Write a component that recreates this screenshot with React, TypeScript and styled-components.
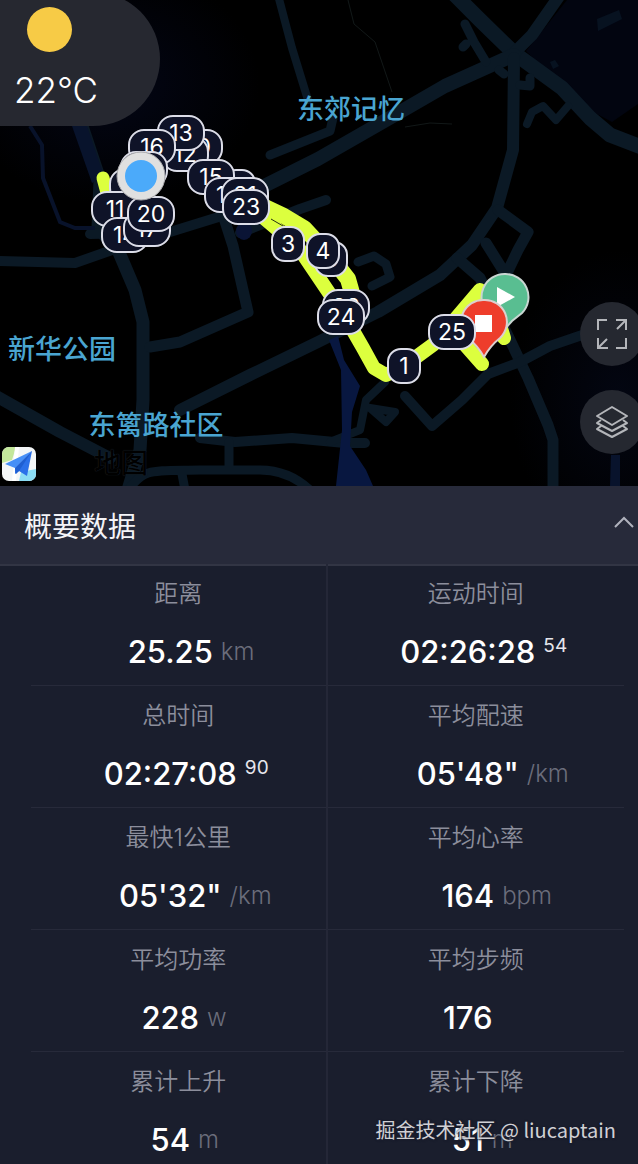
import React from 'react';
import styled, { createGlobalStyle } from 'styled-components';

const MAP_W = 638;
const MAP_H = 486;

const GlobalStyle = createGlobalStyle`
  *, *::before, *::after { box-sizing: border-box; }
  body {
    margin: 0;
    background: #1a1e2d;
    color: #fff;
    font-family: Inter, "Noto Sans CJK SC", sans-serif;
  }
  button { font: inherit; color: inherit; border: 0; padding: 0; cursor: pointer; }
`;

const Page = styled.main`
  position: relative;
  width: 100%;
  overflow: hidden;
`;

const MapArea = styled.section`
  position: relative;
  height: 486px;
  overflow: hidden;
  background: #000;
`;

const MapDrawing = styled.svg`
  display: block;
  width: 100%;
  height: 100%;
`;

const Place = styled.span<{ $x: number; $y: number }>`
  position: absolute;
  left: ${p => (p.$x / MAP_W) * 100}%;
  top: ${p => (p.$y / MAP_H) * 100}%;
  transform: translate(-50%, -50%);
  color: #4aa5d1;
  font-size: 27px;
  line-height: 32px;
  font-weight: 500;
  white-space: nowrap;
`;

const Credit = styled(Place)`
  color: #000;
  text-shadow: 0 0 1px #26323c;
`;

const Pin = styled.span<{ $x: number; $y: number; $wide: boolean }>`
  position: absolute;
  left: ${p => (p.$x / MAP_W) * 100}%;
  top: ${p => (p.$y / MAP_H) * 100}%;
  transform: translate(-50%, -50%);
  display: flex;
  align-items: center;
  justify-content: center;
  width: ${p => (p.$wide ? 48 : 34)}px;
  height: 36px;
  border: 2px solid #dcdde8;
  border-radius: ${p => (p.$wide ? 16 : 14)}px;
  background: #0f1328;
  color: #fff;
  font-size: 23px;
  line-height: 24px;
`;

const Marker = styled.svg<{ $x: number; $y: number }>`
  position: absolute;
  left: ${p => (p.$x / MAP_W) * 100}%;
  top: ${p => (p.$y / MAP_H) * 100}%;
  transform: translate(-50%, -50%);
`;

const Weather = styled.div`
  position: absolute;
  top: -8px;
  left: 0;
  width: 160px;
  height: 134px;
  padding: 15px 0 0 14px;
  border-radius: 0 67px 67px 0;
  background: #262830;
`;

const Sun = styled.div`
  width: 45px;
  height: 45px;
  margin-left: 13px;
  border-radius: 50%;
  background: #f7cb46;
`;

const Temperature = styled.div`
  margin-top: 16px;
  font-size: 35px;
  font-weight: 350;
  line-height: 44px;
`;

const Controls = styled.div`
  position: absolute;
  top: 302px;
  right: -6px;
  display: flex;
  flex-direction: column;
  gap: 24px;
`;

const RoundButton = styled.button`
  display: grid;
  place-items: center;
  width: 64px;
  height: 64px;
  border-radius: 50%;
  background: #252830;
`;

const MapLogo = styled.svg`
  position: absolute;
  left: 2px;
  bottom: 5px;
`;

const SectionTitle = styled.h2`
  margin: 0 0 -2px;
  font-size: 28px;
  font-weight: 400;
`;

const Toggle = styled.button`
  display: flex;
  align-items: center;
  justify-content: space-between;
  width: 100%;
  height: 80px;
  padding: 4px 4px 0 24px;
  border-bottom: 2px solid #323544;
  background: #272a3a;
  line-height: 40px;
  && { color: #f4f4f8; }
`;

const Chevron = styled.svg`
  margin-bottom: 10px;
`;

const Stats = styled.dl`
  display: grid;
  grid-template-columns: 1fr 1fr;
  margin: 0;
  padding: 0 14px 0 31px;
`;

const Stat = styled.div`
  padding: 16px 0 13px;
  border-bottom: 1px solid #272a3a;
  &:nth-child(odd) { border-right: 2px solid #242737; }
  &:nth-last-child(-n + 2) {
    padding-bottom: 4px;
    border-bottom: 0;
  }
`;

const Label = styled.dt`
  color: #8c8e9c;
  font-size: 24px;
  font-weight: 350;
  line-height: 28px;
  text-align: center;
`;

const Reading = styled.dd`
  display: grid;
  grid-template-columns: 1fr auto 1fr;
  align-items: center;
  margin: 24px 0 0;
  padding-right: 16px;
  line-height: 40px;
`;

const Value = styled.span`
  grid-column: 2;
  font-size: 31px;
  font-weight: 500;
`;

const Unit = styled.span`
  padding-left: 8px;
  color: #6b6d7b;
  font-size: 24px;
  font-weight: 350;
  line-height: 38px;
`;

const Hundredths = styled.sup`
  align-self: start;
  padding-left: 8px;
  color: #e6e6ec;
  font-size: 19px;
  line-height: 28px;
`;

const Watermark = styled.div`
  position: absolute;
  right: 22px;
  bottom: 20px;
  color: #d0d0d4;
  font-family: "Noto Sans CJK SC", sans-serif;
  font-size: 20px;
  line-height: 28px;
  text-shadow: 0 0 2px #1a1d2d, 1px 1px 2px #1a1d2d;
`;

type PinData = { n: string; x: number; y: number };

const lowerPins: PinData[] = [
  { n: '10', x: 199, y: 147 },
  { n: '12', x: 185, y: 154 },
  { n: '13', x: 181, y: 133 },
  { n: '16', x: 152, y: 147 },
  { n: '18', x: 133, y: 186 },
  { n: '19', x: 144, y: 169 },
  { n: '9', x: 239, y: 187 },
  { n: '15', x: 211, y: 177 },
  { n: '14', x: 228, y: 195 },
  { n: '21', x: 245, y: 195 },
  { n: '23', x: 246, y: 207 },
  { n: '3', x: 288, y: 244 },
  { n: '5', x: 331, y: 259 },
  { n: '4', x: 323, y: 251 },
  { n: '22', x: 346, y: 307 },
  { n: '24', x: 341, y: 317 },
  { n: '1', x: 404, y: 366 },
  { n: '11', x: 115, y: 209 },
  { n: '14', x: 125, y: 235 },
  { n: '17', x: 147, y: 229 },
];

const upperPins: PinData[] = [
  { n: '25', x: 452, y: 332 },
  { n: '20', x: 151, y: 214 },
];

const places = [
  { name: '东郊记忆', x: 351, y: 110 },
  { name: '新华公园', x: 62, y: 350 },
  { name: '东篱路社区', x: 156, y: 426 },
];

type StatData = { label: string; value: string; unit?: string; sup?: string };

const stats: StatData[] = [
  { label: '距离', value: '25.25', unit: 'km' },
  { label: '运动时间', value: '02:26:28', sup: '54' },
  { label: '总时间', value: '02:27:08', sup: '90' },
  { label: '平均配速', value: '05\'48"', unit: '/km' },
  { label: '最快1公里', value: '05\'32"', unit: '/km' },
  { label: '平均心率', value: '164', unit: 'bpm' },
  { label: '平均功率', value: '228', unit: 'w' },
  { label: '平均步频', value: '176' },
  { label: '累计上升', value: '54', unit: 'm' },
  { label: '累计下降', value: '51', unit: 'm' },
];

const Pins = ({ items }: { items: PinData[] }) => (
  <>
    {items.map((p, i) => (
      <Pin key={i} $x={p.x} $y={p.y} $wide={p.n.length > 1}>{p.n}</Pin>
    ))}
  </>
);

const Streets = () => (
  <MapDrawing viewBox={`0 0 ${MAP_W} ${MAP_H}`} preserveAspectRatio="none" aria-hidden="true">
    <defs>
      <radialGradient id="nightWest" cx="0.5" cy="0.5" r="0.5">
        <stop offset="0" stopColor="#030616" />
        <stop offset="1" stopColor="#000" />
      </radialGradient>
      <radialGradient id="nightEast" cx="0.5" cy="0.5" r="0.5">
        <stop offset="0" stopColor="#030612" />
        <stop offset="1" stopColor="#000" />
      </radialGradient>
    </defs>
    <rect width="638" height="486" fill="#000" />
    <ellipse cx="110" cy="85" rx="150" ry="120" fill="url(#nightWest)" />
    <ellipse cx="620" cy="400" rx="110" ry="150" fill="url(#nightEast)" />
    <path d="M567 0H638V104L612 122L580 105L526 51Z" fill="#020510" />
    <g fill="none" stroke="#0b1925" strokeWidth="12" strokeLinejoin="round" strokeLinecap="round">
      <path d="M644 148L610 135L590 118L562 88L514 53L480 20L455 -5" strokeWidth="15" />
      <path d="M514 53L532 35L560 -5" />
      <path d="M514 55L445 86L400 112L318 159L250 193" strokeWidth="14" />
      <path d="M514 58L513 150L497 208L472 245L440 275L378 312L318 342L250 375L180 410" />
      <path d="M270 155L330 131L333 118" strokeWidth="9" />
      <path d="M240 233L300 209L326 200" strokeWidth="10" />
      <path d="M278 -5L292 48L308 100" strokeWidth="8" />
      <path d="M82 126L100 180L98 228L118 250L135 290L143 322L143 400L140 450L128 490" strokeWidth="13" />
      <path d="M90 234L170 232L225 215" strokeWidth="10" />
      <path d="M0 261L75 263L112 250" strokeWidth="10" />
      <path d="M223 215L233 246L248 312L180 342L150 347" strokeWidth="11" />
      <path d="M-4 396L60 432L110 458" />
      <path d="M200 438L235 442L292 438L345 443H365" strokeWidth="10" />
      <path d="M229 442V470M128 490C145 468 150 471 200 470H260Q290 470 312 492M185 490L182 474" strokeWidth="9" />
      <path d="M465 24L474 42L486 62M463 47L466 44M499 70L504 74M530 78L530 86L520 85" strokeWidth="9" />
      <path d="M527 124L532 112L543 106L556 120L568 106" strokeWidth="8" />
      <path d="M498 210L528 232L518 250L506 275L486 243M457 258L480 278L510 340L528 378L548 425L553 440V490" strokeWidth="11" />
      <path d="M585 334L550 346L520 362L488 374L462 400L432 426L405 396" strokeWidth="10" />
      <path d="M358 262L374 256L386 264L390 277L372 286" strokeWidth="9" />
      <path d="M385 382L366 400L360 430L330 442M370 408L395 412L386 422Z" strokeWidth="8" />
    </g>
    <path d="M30 126L42 145L43 178L60 222L75 228L95 228" fill="none" stroke="#08122a" strokeWidth="4" />
    <path d="M72 126H87L104 176L92 183Z" fill="#08132c" />
    <path d="M329 340L338 336L344 360L360 386L352 412L350 446L366 470L373 486H336L342 430L341 370Z" fill="#081740" />
    <path d="M611 455H620V486H610Z" fill="#08132c" />
    <path d="M597 19L619 10L622 19L598 31Z M550 62L555 60L559 66L553 69Z" fill="#071220" />
    <ellipse cx="244" cy="231" rx="8" ry="9" fill="#0a1435" />
    <path d="M348 0L354 24L375 42L392 92M405 127L430 123L452 124" fill="none" stroke="#121818" strokeWidth="1" />
    <g fill="none" stroke="#dcff3e" strokeWidth="14" strokeLinejoin="round" strokeLinecap="round">
      <path d="M103 178L109 200L130 222" strokeWidth="13" />
      <path d="M250 206L278 230L296 244L315 272L344 315L363 348L374 368L386 375L404 366L434 344L480 290L500 325L504 338" />
      <path d="M250 200L284 216L304 228L330 256L348 279L354 300" strokeWidth="16" />
      <path d="M452 330L482 364" />
    </g>
    <path d="M271 219L283 226" fill="none" stroke="#263012" strokeWidth="1" />
  </MapDrawing>
);

export default function App() {
  return (
    <Page>
      <GlobalStyle />
      <MapArea aria-label="轨迹地图">
        <Streets />
        {places.map(p => <Place key={p.name} $x={p.x} $y={p.y}>{p.name}</Place>)}
        <Credit $x={121} $y={464}>地图</Credit>
        <Pins items={lowerPins} />
        <Marker $x={505} $y={302} width="50" height="60" viewBox="0 0 50 60" aria-hidden="true">
          <path d="M25 2A23 23 0 0 1 42 41L32 49L25 57L18 49L8 41A23 23 0 0 1 25 2Z" fill="#59be91" stroke="#c9d6d2" strokeWidth="2" />
          <path d="M17 15L35 25L17 35Z" fill="#fff" />
        </Marker>
        <Marker $x={484} $y={329} width="48" height="62" viewBox="0 0 48 62" aria-hidden="true">
          <path d="M24 2A22 22 0 0 1 40 40Q30 48 24 59Q18 48 8 40A22 22 0 0 1 24 2Z" fill="#ee3d2b" stroke="#dccfcf" strokeWidth="2" />
          <rect x="15" y="17" width="17" height="17" fill="#fff" />
        </Marker>
        <Pins items={upperPins} />
        <Marker $x={141} $y={176} width="52" height="52" viewBox="0 0 52 52" aria-hidden="true">
          <circle cx="26" cy="26" r="24" fill="#e0e0e0" stroke="#a9a9ac" strokeWidth="1" />
          <circle cx="26" cy="26" r="16" fill="#4baafa" />
        </Marker>
        <Weather>
          <Sun />
          <Temperature>22°C</Temperature>
        </Weather>
        <Controls>
          <RoundButton type="button" aria-label="全屏">
            <svg width="32" height="32" viewBox="0 0 32 32" fill="none" stroke="#b4b6ba" strokeWidth="2">
              <path d="M2 12V2H11M20 2H30V12M30 2L21 11M30 20V30H20M2 20V30H12M2 30L11 21" />
            </svg>
          </RoundButton>
          <RoundButton type="button" aria-label="图层">
            <svg width="34" height="34" viewBox="0 0 34 34" fill="none" stroke="#b4b6ba" strokeWidth="2" strokeLinejoin="round">
              <path d="M17 2L32 11L17 20L2 11Z" />
              <path d="M6 15L2 18L17 26L32 18L28 15M6 21L2 24L17 32L32 24L28 21" />
            </svg>
          </RoundButton>
        </Controls>
        <MapLogo width="34" height="34" viewBox="0 0 34 34" aria-hidden="true">
          <defs><clipPath id="logoClip"><rect width="34" height="34" rx="7" /></clipPath></defs>
          <g clipPath="url(#logoClip)">
            <rect width="34" height="34" fill="#f3f6f7" />
            <path d="M0 0H14L10 13L0 16Z" fill="#c3e79b" />
            <path d="M19 25L34 22V34H17Z" fill="#8bdcf4" />
            <path d="M13 0H17L14 34H10Z" fill="#fff" />
            <path d="M30 4L3 17L13 21Z" fill="#468ff7" />
            <path d="M30 4L13 21V27L17 24L25 29Z" fill="#2b70e9" />
            <path d="M30 4L13 21L14 27L17 24Z" fill="#1f5fd2" />
          </g>
        </MapLogo>
      </MapArea>

      <section>
        <SectionTitle>
          <Toggle type="button" aria-expanded="true">
            概要数据
            <Chevron width="20" height="13" viewBox="0 0 20 13" fill="none" stroke="#b0b2bd" strokeWidth="2" aria-hidden="true">
              <path d="M1 11L10 2L19 11" />
            </Chevron>
          </Toggle>
        </SectionTitle>
        <Stats>
          {stats.map(s => (
            <Stat key={s.label}>
              <Label>{s.label}</Label>
              <Reading>
                <Value>{s.value}</Value>
                {s.unit && <Unit>{s.unit}</Unit>}
                {s.sup && <Hundredths>{s.sup}</Hundredths>}
              </Reading>
            </Stat>
          ))}
        </Stats>
      </section>
      <Watermark>掘金技术社区 @ liucaptain</Watermark>
    </Page>
  );
}
